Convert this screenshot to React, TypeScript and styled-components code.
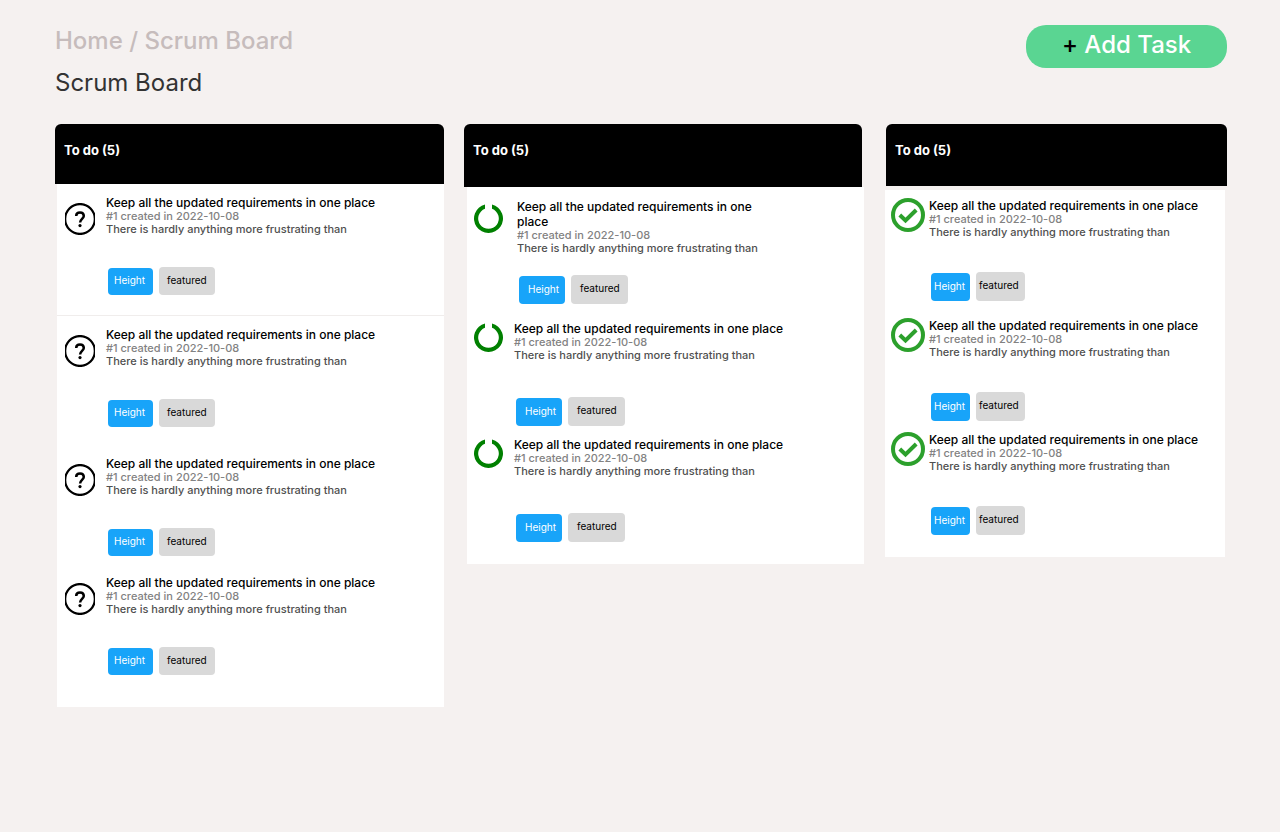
import React from "react";
import styled, { createGlobalStyle } from "styled-components";

const GlobalStyle = createGlobalStyle`
  * { box-sizing: border-box; }
  body {
    margin: 0;
    background: #f5f1f0;
    color: #000;
    font-family: Inter, "Liberation Sans", sans-serif;
  }
`;

const Page = styled.div`
  min-height: 100vh;
  padding: 25px 53px 48px 55px;
`;

const TopBar = styled.header`
  display: flex;
  justify-content: space-between;
  align-items: flex-start;
  margin-bottom: 26px;
`;

const Breadcrumb = styled.nav`
  font-size: 24px;
  line-height: 32px;
  font-weight: 500;
  color: #c6bcbc;
`;

const Crumb = styled.a`
  color: inherit;
  text-decoration: none;
`;

const PageTitle = styled.h1`
  margin: 10px 0 0;
  font-size: 24px;
  line-height: 31px;
  font-weight: 400;
  color: #333;
`;

const AddButton = styled.button`
  width: 201px;
  height: 43px;
  padding: 0 0 4px;
  border: 0;
  border-radius: 20px;
  background: #5ad592;
  color: #fff;
  font-family: inherit;
  font-size: 24px;
  line-height: 30px;
  font-weight: 500;
  font-feature-settings: "calt" 0;
  cursor: pointer;
`;

const Plus = styled.span`
  color: #000;
`;

const Board = styled.main`
  display: flex;
  align-items: flex-start;
`;

const Column = styled.section<{ $grow: number; $gap: number }>`
  flex: ${(p) => p.$grow} 1 0;
  min-width: 0;
  margin-left: ${(p) => p.$gap}px;
`;

const ColumnHeader = styled.h2<{ $height: number }>`
  height: ${(p) => p.$height}px;
  margin: 0;
  padding: 17px 9px;
  border-radius: 6px 6px 0 0;
  background: #000;
  color: #fff;
  font-size: 13px;
  line-height: 18px;
  font-weight: 700;
`;

const CardList = styled.ul<{ $top: number; $left: number; $right: number; $pad: number }>`
  list-style: none;
  margin: ${(p) => p.$top}px ${(p) => p.$right}px 0 ${(p) => p.$left}px;
  padding: ${(p) => p.$pad}px 0 0;
  background: #fff;
`;

const Card = styled.li<{ $top: number; $left: number; $space: number; $divided?: boolean }>`
  display: flex;
  padding: ${(p) => p.$top}px 0 ${(p) => p.$space}px ${(p) => p.$left}px;
  border-bottom: ${(p) => (p.$divided ? "1px solid #f0edec" : "0")};
`;

const IconSlot = styled.div<{ $width: number; $top: number }>`
  flex: none;
  width: ${(p) => p.$width}px;
  padding-top: ${(p) => p.$top}px;
  svg { display: block; }
`;

const CardBody = styled.div<{ $height: number; $narrow?: boolean }>`
  display: flex;
  flex-direction: column;
  min-height: ${(p) => p.$height}px;
  max-width: ${(p) => (p.$narrow ? "260px" : "none")};
  margin-left: ${(p) => (p.$narrow ? "3px" : "0")};
`;

const CardTitle = styled.h3`
  margin: 0;
  font-size: 12px;
  line-height: 15px;
  font-weight: 500;
`;

const Meta = styled.p`
  margin: 0;
  font-size: 11px;
  line-height: 13px;
  font-weight: 500;
  color: #828282;
`;

const Summary = styled.p`
  margin: 0;
  font-size: 11px;
  line-height: 13px;
  font-weight: 500;
  color: #4f4f4f;
`;

const Tags = styled.div`
  display: flex;
  align-items: flex-end;
  gap: 6px;
  margin-top: auto;
  padding-left: 2px;
`;

const Tag = styled.span<{ $tone: "blue" | "gray"; $width: number; $height: number; $pad: number }>`
  width: ${(p) => p.$width}px;
  height: ${(p) => p.$height}px;
  padding-left: ${(p) => p.$pad}px;
  border-radius: 4px;
  background: ${(p) => (p.$tone === "blue" ? "#18a4f9" : "#d9d9d9")};
  color: ${(p) => (p.$tone === "blue" ? "#fff" : "#000")};
  font-size: 10px;
  line-height: ${(p) => p.$height - 2}px;
`;

const QuestionIcon = () => (
  <svg width="30" height="32" viewBox="0 0 30 32" fill="none" stroke="#000" strokeWidth="2.3" aria-hidden="true">
    <circle cx="15" cy="16" r="14.900" />
    <path d="M11.200 12.900c0-2.100 1.600-3.400 3.800-3.400s3.800 1.400 3.800 3.500c0 2.700-3.700 3.200-3.700 6.500" strokeWidth="2.500" />
    <circle cx="15" cy="22.600" r="1.600" fill="#000" stroke="none" />
  </svg>
);

const RingIcon = () => (
  <svg width="29" height="29" viewBox="0 0 29 29" fill="#008000" aria-hidden="true">
    <path d="M18 0.430A14.500 14.500 0 1 1 11 0.430V4.830A10.300 10.300 0 1 0 18 4.830Z" />
  </svg>
);

const CheckIcon = () => (
  <svg width="34" height="34" viewBox="0 0 34 34" fill="none" stroke="#2ca02c" strokeWidth="4" aria-hidden="true">
    <circle cx="17" cy="17" r="15" />
    <path d="M8.800 17l5.700 5.400L25.200 12" />
  </svg>
);

type CardData = { id: string; space: number; divided?: boolean; narrow?: boolean };
type ColumnData = {
  id: string;
  grow: number;
  gap: number;
  header: number;
  list: { top: number; left: number; right: number; pad: number };
  card: { top: number; left: number; height: number };
  icon: { node: React.ReactNode; width: number; top: number };
  tags: { blue: [number, number, number]; gray: [number, number, number] };
  cards: CardData[];
};

const columns: ColumnData[] = [
  {
    id: "open", grow: 389, gap: 0, header: 60,
    list: { top: 0, left: 2, right: 0, pad: 0 },
    card: { top: 11, left: 8, height: 100 },
    icon: { node: <QuestionIcon />, width: 41, top: 8 },
    tags: { blue: [45, 27, 6], gray: [56, 28, 8] },
    cards: [
      { id: "a", space: 20, divided: true },
      { id: "b", space: 18 },
      { id: "c", space: 8 },
      { id: "d", space: 32 },
    ],
  },
  {
    id: "progress", grow: 398, gap: 20, header: 63,
    list: { top: 0, left: 3, right: -2, pad: 1 },
    card: { top: 11, left: 7, height: 105 },
    icon: { node: <RingIcon />, width: 40, top: 2 },
    tags: { blue: [46, 28, 9], gray: [57, 29, 9] },
    cards: [
      { id: "a", space: 6, narrow: true },
      { id: "b", space: 0 },
      { id: "c", space: 22 },
    ],
  },
  {
    id: "done", grow: 341, gap: 24, header: 62,
    list: { top: 4, left: -1, right: 2, pad: 0 },
    card: { top: 8, left: 6, height: 103 },
    icon: { node: <CheckIcon />, width: 38, top: 0 },
    tags: { blue: [39, 28, 3], gray: [49, 29, 3] },
    cards: [
      { id: "a", space: 9 },
      { id: "b", space: 3 },
      { id: "c", space: 22 },
    ],
  },
];

export default function App() {
  return (
    <>
      <GlobalStyle />
      <Page>
        <TopBar>
          <div>
            <Breadcrumb aria-label="Breadcrumb">
              <Crumb href="#home">Home</Crumb> / <Crumb href="#board">Scrum Board</Crumb>
            </Breadcrumb>
            <PageTitle>Scrum Board</PageTitle>
          </div>
          <AddButton type="button">
            <Plus>+</Plus> Add Task
          </AddButton>
        </TopBar>
        <Board>
          {columns.map((col) => (
            <Column key={col.id} $grow={col.grow} $gap={col.gap}>
              <ColumnHeader $height={col.header}>To do (5)</ColumnHeader>
              <CardList $top={col.list.top} $left={col.list.left} $right={col.list.right} $pad={col.list.pad}>
                {col.cards.map((card) => (
                  <Card key={card.id} $top={col.card.top} $left={col.card.left} $space={card.space} $divided={card.divided}>
                    <IconSlot $width={col.icon.width} $top={card.narrow ? 5 : col.icon.top}>{col.icon.node}</IconSlot>
                    <CardBody $height={col.card.height} $narrow={card.narrow}>
                      <CardTitle>Keep all the updated requirements in one place</CardTitle>
                      <Meta>#1 created in 2022-10-08</Meta>
                      <Summary>There is hardly anything more frustrating than</Summary>
                      <Tags>
                        <Tag $tone="blue" $width={col.tags.blue[0]} $height={col.tags.blue[1]} $pad={col.tags.blue[2]}>Height</Tag>
                        <Tag $tone="gray" $width={col.tags.gray[0]} $height={col.tags.gray[1]} $pad={col.tags.gray[2]}>featured</Tag>
                      </Tags>
                    </CardBody>
                  </Card>
                ))}
              </CardList>
            </Column>
          ))}
        </Board>
      </Page>
    </>
  );
}
